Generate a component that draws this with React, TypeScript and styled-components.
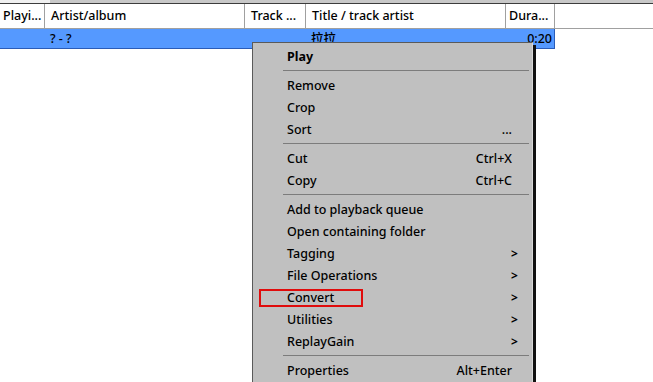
import styled, { createGlobalStyle } from "styled-components";

const GlobalStyle = createGlobalStyle`
  html, body {
    margin: 0;
    padding: 0;
    background: #ffffff;
  }
  body {
    font-family: "Noto Sans", "Noto Sans CJK SC", sans-serif;
    font-size: 12.5px;
    font-weight: 500;
    color: #000;
    overflow: hidden;
  }
`;

const Page = styled.div`
  position: relative;
  width: 653px;
  height: 382px;
  overflow: hidden;
  background: #fff;
`;

const TopStrip = styled.div`
  display: flex;
  height: 3px;
  border-bottom: 1px solid #3c3c3c;
`;

const StripLeft = styled.div`
  width: 50px;
  background: #f0f0f0;
`;

const StripRight = styled.div`
  flex: 1;
  background: #c8c8c8;
`;

const Header = styled.div`
  display: flex;
  height: 24px;
  border-bottom: 1px solid #a0a0a0;
`;

const HeadCell = styled.div<{ w: number }>`
  width: ${(p) => p.w}px;
  flex: none;
  box-sizing: border-box;
  border-right: 1px solid #a0a0a0;
  padding-left: ${(p) => (p.w < 50 ? 3 : 6)}px;
  line-height: 24px;
  white-space: nowrap;
  overflow: hidden;
`;

const Row = styled.div`
  display: flex;
  width: 554px;
  height: 19px;
  background: #5599ff;
  border-bottom: 1px solid #2a5cb8;
  border-right: 1px solid #2a5cb8;
  box-sizing: content-box;
`;

const Cell = styled.div<{ w: number; right?: boolean }>`
  width: ${(p) => p.w}px;
  flex: none;
  box-sizing: border-box;
  padding: 0 ${(p) => (p.right ? 2 : 4)}px 0 5px;
  line-height: 19px;
  text-align: ${(p) => (p.right ? "right" : "left")};
  white-space: nowrap;
  overflow: hidden;
`;

const Menu = styled.div`
  position: absolute;
  left: 252px;
  top: 42px;
  width: 279px;
  padding: 2px 0 4px;
  background: #c0c0c0;
  border: 1px solid #5a5a5a;
  border-right-color: #d8d8d8;
  box-shadow: 3px 3px 0 #111;
`;

const Item = styled.div<{ bold?: boolean }>`
  display: flex;
  align-items: center;
  height: 22px;
  padding-left: 34px;
  font-weight: ${(p) => (p.bold ? 700 : 500)};
`;

const Label = styled.span`
  flex: 1;
`;

const Shortcut = styled.span`
  padding-right: 20px;
`;

const Arrow = styled.span`
  width: 10px;
  padding-right: 11px;
  font-size: 12px;
  font-weight: 700;
  text-align: left;
`;

const Separator = styled.div`
  height: 7px;
  display: flex;
  align-items: center;
  padding-left: 30px;
  padding-right: 3px;
  &::after {
    content: "";
    flex: 1;
    height: 1px;
    background: #7c7c7c;
  }
`;

const Highlight = styled.div`
  position: absolute;
  left: 259px;
  top: 289px;
  width: 104px;
  height: 18px;
  box-sizing: border-box;
  border: 2px solid #e00c0c;
`;

type Entry =
  | { sep: true }
  | { label: string; shortcut?: string; sub?: boolean; bold?: boolean };

const entries: Entry[] = [
  { label: "Play", bold: true },
  { sep: true },
  { label: "Remove" },
  { label: "Crop" },
  { label: "Sort", shortcut: "..." },
  { sep: true },
  { label: "Cut", shortcut: "Ctrl+X" },
  { label: "Copy", shortcut: "Ctrl+C" },
  { sep: true },
  { label: "Add to playback queue" },
  { label: "Open containing folder" },
  { label: "Tagging", sub: true },
  { label: "File Operations", sub: true },
  { label: "Convert", sub: true },
  { label: "Utilities", sub: true },
  { label: "ReplayGain", sub: true },
  { sep: true },
  { label: "Properties", shortcut: "Alt+Enter" },
];

const columns = [
  { title: "Playi...", w: 45 },
  { title: "Artist/album", w: 200 },
  { title: "Track ...", w: 61 },
  { title: "Title / track artist", w: 200 },
  { title: "Dura...", w: 49 },
];

function App() {
  return (
    <Page>
      <GlobalStyle />
      <TopStrip>
        <StripLeft />
        <StripRight />
      </TopStrip>
      <Header>
        {columns.map((c) => (
          <HeadCell key={c.title} w={c.w}>
            {c.title}
          </HeadCell>
        ))}
      </Header>
      <Row>
        <Cell w={45} />
        <Cell w={200}>? - ?</Cell>
        <Cell w={61} />
        <Cell w={200}>拉拉</Cell>
        <Cell w={48} right>
          0:20
        </Cell>
      </Row>
      <Menu>
        {entries.map((e, i) =>
          "sep" in e ? (
            <Separator key={i} />
          ) : (
            <Item key={i} bold={e.bold}>
              <Label>{e.label}</Label>
              {e.shortcut ? <Shortcut>{e.shortcut}</Shortcut> : null}
              {e.sub ? <Arrow>&gt;</Arrow> : null}
            </Item>
          )
        )}
      </Menu>
      <Highlight />
    </Page>
  );
}

export default App;
